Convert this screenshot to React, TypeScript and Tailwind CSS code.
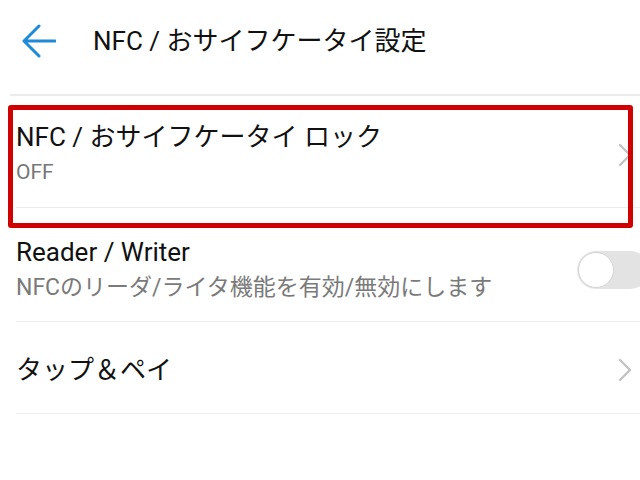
import React from "react"

const font = "font-['Roboto','Noto_Sans_CJK_JP',sans-serif]"

function Chevron() {
  return (
    <svg width="14" height="24" viewBox="0 0 14 24" fill="none" className="shrink-0">
      <path d="M2 2 L12 12 L2 22" stroke="#c2c2c2" strokeWidth="2.4" strokeLinecap="round" strokeLinejoin="round" />
    </svg>
  )
}

function Toggle() {
  return (
    <div className="-mr-[17px] flex h-[38px] w-[72px] shrink-0 items-center rounded-full bg-[#e3e3e3] pl-[1px]">
      <div className="h-[36px] w-[36px] rounded-full border border-[#d4d4d4] bg-white" />
    </div>
  )
}

export default function App() {
  return (
    <div className={`relative h-[480px] w-[640px] overflow-hidden bg-white ${font}`}>
      <header className="flex h-[94px] items-center pb-[12px]">
        <svg width="34" height="34" viewBox="0 0 34 34" fill="none" className="ml-[22px] shrink-0">
          <path d="M2 17 H33 M17 2 L2 17 L17 32" stroke="#1f8ad8" strokeWidth="3" strokeLinecap="round" strokeLinejoin="round" />
        </svg>
        <h1 className="ml-[37px] text-[26px] leading-none text-[#111]">NFC / おサイフケータイ設定</h1>
      </header>
      <div className="ml-[10px] h-[2px] bg-[#ebebeb]" />

      <ul>
        <li className="ml-4 flex h-[112px] items-center justify-between border-b border-[#ededed] pr-2 pt-[7px]">
          <div>
            <p className="text-[26px] leading-[35px] text-[#111]">NFC / おサイフケータイ ロック</p>
            <p className="text-[21px] leading-[35px] text-[#777]">OFF</p>
          </div>
          <Chevron />
        </li>
        <li className="ml-4 flex h-[114px] items-center justify-between border-b border-[#ededed] pr-2 pt-[10px]">
          <div>
            <p className="text-[26px] leading-[35px] text-[#111]">Reader / Writer</p>
            <p className="text-[23px] leading-[35px] text-[#7a7a7a]">NFCのリーダ/ライタ機能を有効/無効にします</p>
          </div>
          <Toggle />
        </li>
        <li className="ml-4 flex h-[92px] items-center justify-between border-b border-[#ededed] pr-2 pt-[5px]">
          <p className="text-[26px] leading-[35px] text-[#111]">タップ＆ペイ</p>
          <Chevron />
        </li>
      </ul>

      <div className="pointer-events-none absolute left-[8px] top-[105px] h-[123px] w-[625px] rounded-[3px] border-[5px] border-[#d00000]" />
    </div>
  )
}
